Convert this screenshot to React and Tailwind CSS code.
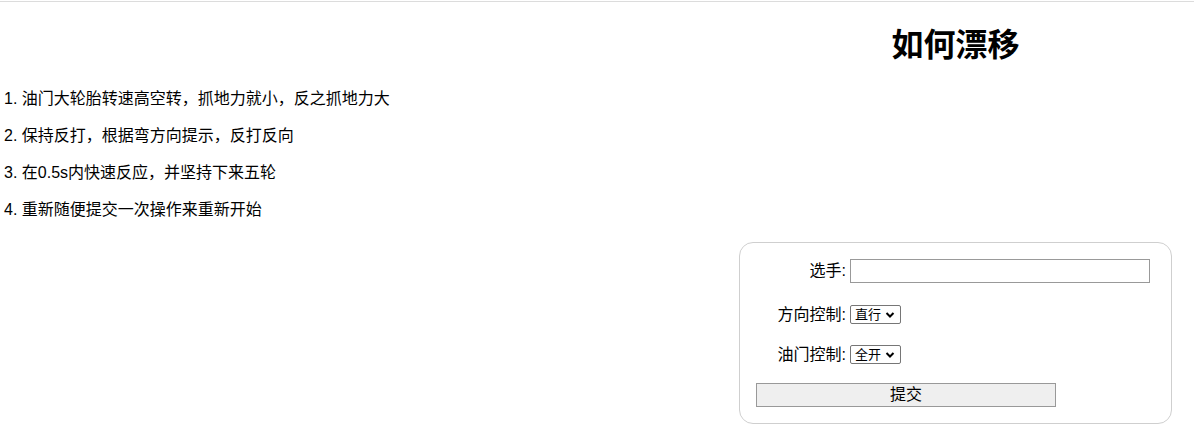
export default function App() {
  const steps = [
    "1. 油门大轮胎转速高空转，抓地力就小，反之抓地力大",
    "2. 保持反打，根据弯方向提示，反打反向",
    "3. 在0.5s内快速反应，并坚持下来五轮",
    "4. 重新随便提交一次操作来重新开始",
  ];
  return (
    <div className="w-[1194px] h-[441px] bg-white text-black font-['Liberation_Sans','Noto_Sans_CJK_SC',sans-serif] overflow-hidden">
      <div className="mt-px h-px bg-[#dcdcdc]" />
      <div className="mt-[25px] flex justify-end pr-[22px]">
        <h1 className="w-[433px] text-center text-[32px] font-bold leading-[37px]">如何漂移</h1>
      </div>
      <div className="mt-[23px] flex flex-col gap-[13px] pl-[4px] text-[16px] leading-[24px]">
        {steps.map((s) => (
          <p key={s}>{s}</p>
        ))}
      </div>
      <div className="mt-[20px] flex justify-end pr-[22px]">
        <form
          className="w-[433px] h-[182px] border border-[#cfcfcf] rounded-[14px] p-4 flex flex-col text-[16px]"
          onSubmit={(e) => e.preventDefault()}
        >
          <div className="flex items-center h-[24px]">
            <label className="w-[90px] text-right">选手:</label>
            <input className="ml-[4px] w-[300px] h-[24px] border border-[#999] bg-white" />
          </div>
          <div className="mt-[22px] flex items-center h-[19px]">
            <label className="w-[90px] text-right">方向控制:</label>
            <div className="ml-[4px] w-[51px] h-[19px] border border-[#767676] rounded-[2px] flex items-center pl-[4px] text-[13px] leading-none">
              <span>直行</span>
              <svg className="ml-[4px]" width="10" height="8" viewBox="0 0 10 8">
                <path d="M1.5 2 L5 5.5 L8.5 2" fill="none" stroke="#000" strokeWidth="2" />
              </svg>
            </div>
          </div>
          <div className="mt-[21px] flex items-center h-[19px]">
            <label className="w-[90px] text-right">油门控制:</label>
            <div className="ml-[4px] w-[51px] h-[19px] border border-[#767676] rounded-[2px] flex items-center pl-[4px] text-[13px] leading-none">
              <span>全开</span>
              <svg className="ml-[4px]" width="10" height="8" viewBox="0 0 10 8">
                <path d="M1.5 2 L5 5.5 L8.5 2" fill="none" stroke="#000" strokeWidth="2" />
              </svg>
            </div>
          </div>
          <button
            type="submit"
            className="mt-[19px] w-[300px] h-[25px] border border-[#999] bg-[#efefef] text-[16px] leading-none flex items-center justify-center"
          >
            提交
          </button>
        </form>
      </div>
    </div>
  );
}
